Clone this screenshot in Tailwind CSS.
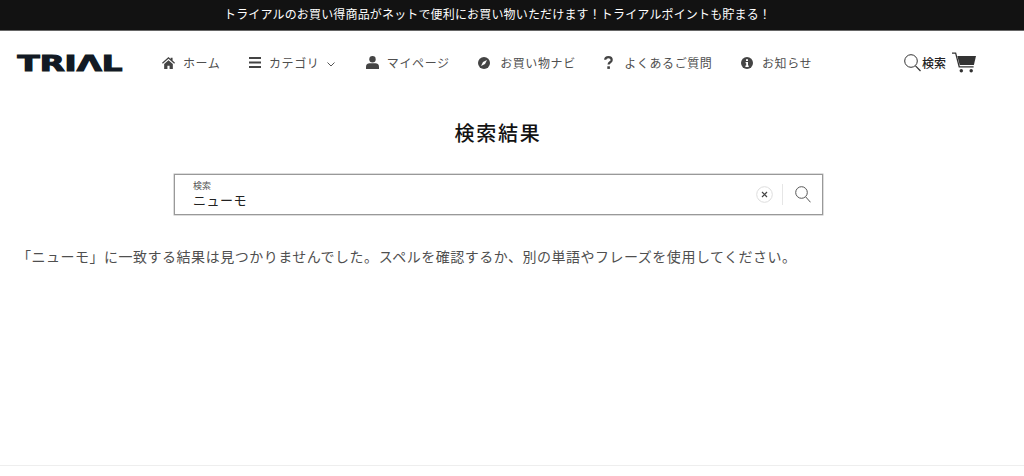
<!DOCTYPE html>
<html lang="ja">
<head>
    <meta charset="UTF-8">
    <title>検索結果</title>
    <script src="https://cdn.jsdelivr.net/npm/@tailwindcss/browser@4"></script>
</head>
<body class="h-[476px] overflow-hidden bg-white font-['Noto_Sans_CJK_JP',sans-serif] text-[#121212]">
    <!-- Announcement -->
    <div class="h-[31px] bg-[#121212] border-b border-[#666] flex items-center justify-center pr-[29px] pb-[3px] text-white text-[12px] tracking-[0.16px]">
        トライアルのお買い得商品がネットで便利にお買い物いただけます！トライアルポイントも貯まる！
    </div>

    <!-- Header -->
    <header class="h-[64px] flex items-center pl-[17px]">
        <svg width="106" height="17" viewBox="0 0 106 17" class="shrink-0 overflow-visible">
            <text x="0.500" y="16" textLength="105" lengthAdjust="spacingAndGlyphs" font-family="DejaVu Sans" font-weight="700" font-size="22" fill="#121a24" stroke="#121a24" stroke-width="1.100">TRIΛL</text>
        </svg>

        <nav class="flex items-center ml-[39px] mb-[1px] text-[12px] tracking-[0.6px] text-[#4f4f4f] gap-[28.500px]">
            <a class="flex items-center gap-[8px]">
                <svg width="13" height="12" viewBox="0 0 24 22" fill="#444"><path d="M12 0 0 10.500l1.500 1.700L12 3l10.500 9.200 1.500-1.700L19.500 6.600V1.500h-3.500v2zM4 13v9h6v-6h4v6h6v-9l-8-7z"/></svg>
                <span>ホーム</span>
            </a>
            <a class="flex items-center gap-[8px]">
                <svg width="12" height="11" viewBox="0 0 12 11" fill="#444"><path d="M0 0h12v2H0zM0 4.500h12v2H0zM0 9h12v2H0z"/></svg>
                <span>カテゴリ</span>
                <svg width="8" height="5" viewBox="0 0 8 5" fill="none" stroke="#555" class="mt-[3px]"><path d="m.5.5 3.500 3.500L7.500.5"/></svg>
            </a>
            <a class="flex items-center gap-[8px] ml-[2px]">
                <svg width="13" height="13" viewBox="0 0 13 13" fill="#444"><circle cx="6.500" cy="3.200" r="3.200"/><path d="M0 13v-2.500C0 8.500 2 7.300 3.500 7.300h6c1.500 0 3.500 1.200 3.500 3.200V13z"/></svg>
                <span>マイページ</span>
            </a>
            <a class="flex items-center gap-[10px]">
                <svg width="12" height="12" viewBox="0 0 12 12"><circle cx="6" cy="6" r="6" fill="#444"/><path d="M9 3 7 7 3 9l2-4z" fill="#fff"/></svg>
                <span>お買い物ナビ</span>
            </a>
            <a class="flex items-center gap-[11px]">
                <svg width="9" height="13" viewBox="0 0 9 13" fill="none"><path d="M1.200 3.800C1.300 2 2.700 1.200 4.400 1.200c1.800 0 3.300 1 3.300 2.700 0 2.400-3.100 2.300-3.100 4.600" stroke="#444" stroke-width="2.200"/><rect x="3.300" y="10.300" width="2.600" height="2.600" fill="#444"/></svg>
                <span>よくあるご質問</span>
            </a>
            <a class="flex items-center gap-[9px]">
                <svg width="12" height="12" viewBox="0 0 12 12"><circle cx="6" cy="6" r="6" fill="#444"/><path d="M5 2.300h2v1.700H5zM4.600 5h2.400v3.600h.7V10H4.400V8.600h.8V6.300h-.6z" fill="#fff"/></svg>
                <span>お知らせ</span>
            </a>
        </nav>

        <div class="ml-auto mr-[48px] flex items-center">
            <svg width="17" height="18" viewBox="0 0 17 18" fill="none" stroke="#333" class="mr-[1px]"><circle cx="7" cy="7" r="6.300"/><path d="m11.500 11.800 5 5.200" stroke-width="1.200"/></svg>
            <span class="text-[12px] text-[#222] font-medium">検索</span>
            <svg width="24" height="21" viewBox="0 0 25 21" class="ml-[6px] mb-[2px]" fill="#333"><path d="M0 0h4.300l3.800 14.500h14.400v1.300H7L3.300 1.400H0z"/><path d="M5.600 3.600H25l-2.200 9.500H8z"/><circle cx="9.700" cy="19" r="1.800"/><circle cx="20" cy="19" r="1.800"/></svg>
        </div>
    </header>

    <main>
        <h1 class="mt-[23px] ml-[-28px] text-center text-[20px] leading-[29px] tracking-[1.700px] font-medium">検索結果</h1>

        <!-- Search box -->
        <div class="mt-[27px] ml-[174px] w-[649px] h-[41px] border border-[#999] shadow-[0_0_0_0.5px_#bbb] flex items-center pl-[18px] pr-[11px]">
            <div class="flex flex-col mb-[1px]">
                <span class="text-[9px] leading-[11px] text-[#555]">検索</span>
                <span class="text-[13px] leading-[18px] tracking-[0.5px] text-[#222]">ニューモ</span>
            </div>
            <svg width="17" height="17" viewBox="0 0 17 17" fill="none" class="ml-auto mr-[9px]"><circle cx="8.500" cy="8.500" r="7.800" stroke="#ddd"/><path d="m6 6 5 5m0-5-5 5" stroke="#444" stroke-width="1.200"/></svg>
            <div class="w-px h-[21px] bg-[#e6e6e6] mr-[12px]"></div>
            <svg width="16" height="17" viewBox="0 0 16 17" fill="none" stroke="#555"><circle cx="6.500" cy="6.500" r="5.800"/><path d="m10.800 11 4.700 5.300"/></svg>
        </div>

        <p class="mt-[31px] ml-[17px] text-[14px] leading-[20px] tracking-[0.51px] text-[#4f4f4f]">「ニューモ」に一致する結果は見つかりませんでした。スペルを確認するか、別の単語やフレーズを使用してください。</p>
    </main>

    <div class="absolute left-0 right-0 top-[465px] border-t border-[#eeeeee]"></div>
</body>
</html>
